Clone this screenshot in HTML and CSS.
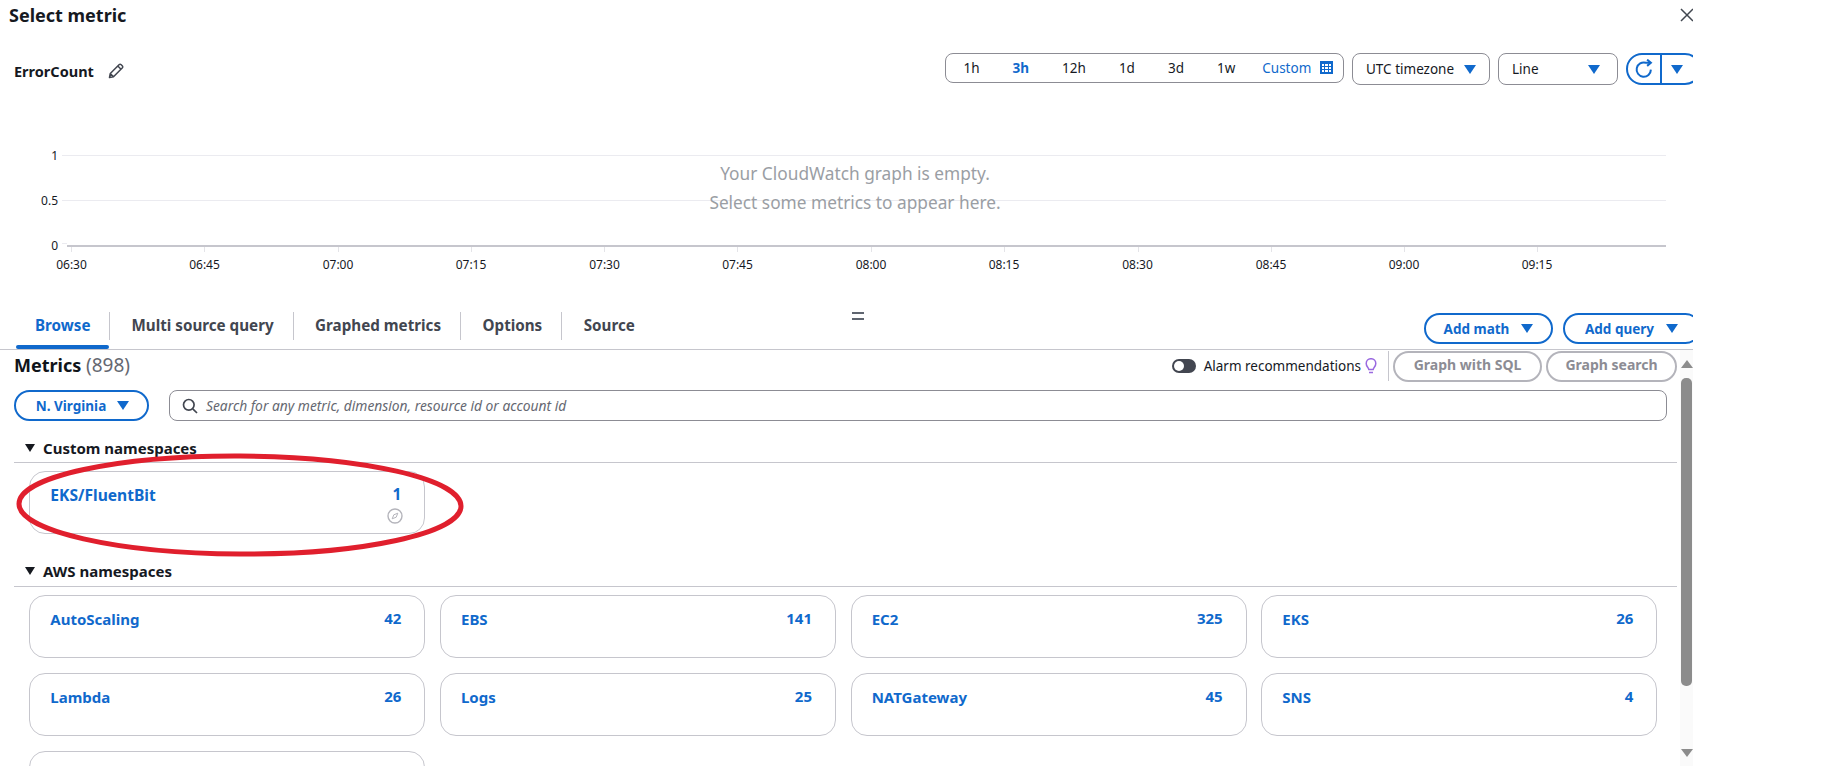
FILE: index.html
```html
<!DOCTYPE html>
<html lang="en">
<head>
<meta charset="utf-8">
<title>Select metric</title>
<link rel="stylesheet" href="styles.css">
</head>
<body>
<div class="dialog">
  <header class="dialog-head">
    <h1 class="dialog-title">Select metric</h1>
    <svg class="close-icon" viewBox="0 0 14 14"><path d="M1 1l12 12M13 1L1 13"/></svg>
  </header>

  <div class="toolbar">
    <div class="graph-name">
      <span>ErrorCount</span>
      <svg class="pencil" viewBox="0 0 16 16"><path d="M1.500 14.500l.8-4L11 1.800a1.600 1.600 0 0 1 2.200 0l1 1a1.600 1.600 0 0 1 0 2.200l-8.700 8.700zM2.300 10.500l3.200 3.200M9.800 3l3.200 3.200"/></svg>
    </div>
    <div class="controls">
      <div class="range">
        <span class="range-item">1h</span>
        <span class="range-item is-active">3h</span>
        <span class="range-item">12h</span>
        <span class="range-item">1d</span>
        <span class="range-item">3d</span>
        <span class="range-item">1w</span>
        <span class="range-custom">Custom</span>
        <svg class="calendar" viewBox="0 0 13 13"><rect width="13" height="13" fill="#1069cc"/><path d="M2 3h9v8H2z" fill="#fff"/><path d="M4.500 3v8M8.500 3v8M2 5.500h9M2 8.500h9" stroke="#1069cc" stroke-width="1"/></svg>
      </div>
      <div class="select select-utc">UTC timezone<i class="caret"></i></div>
      <div class="select select-line">Line<i class="caret"></i></div>
      <div class="refresh">
        <span class="refresh-main"><svg class="refresh-icon" viewBox="0 0 16 16"><path d="M13.500 8.500A5.700 5.700 0 1 1 9.500 3H13"/><path d="M10.500 .5L13.500 3l-3 2.500"/></svg></span>
        <span class="refresh-caret"><i class="caret"></i></span>
      </div>
    </div>
  </div>

  <svg class="chart" width="1693" height="140" viewBox="0 0 1693 140">
    <g class="grid"><path d="M62 15.500H1666M62 60.500H1666M62 103.500H67"/></g>
    <path class="axis" d="M67 106H1666"/>
    <path class="ticks" d="M71.500 107v5M204.500 107v5M338.500 107v5M471.500 107v5M604.500 107v5M737.500 107v5M871.500 107v5M1004.500 107v5M1138.500 107v5M1271.500 107v5M1404.500 107v5M1537.500 107v5"/>
    <g class="y-labels">
      <text x="58" y="20">1</text>
      <text x="58" y="65">0.5</text>
      <text x="58" y="110">0</text>
    </g>
    <g class="x-labels">
      <text x="71.500" y="129">06:30</text>
      <text x="204.500" y="129">06:45</text>
      <text x="338" y="129">07:00</text>
      <text x="471" y="129">07:15</text>
      <text x="604.500" y="129">07:30</text>
      <text x="737.500" y="129">07:45</text>
      <text x="871" y="129">08:00</text>
      <text x="1004" y="129">08:15</text>
      <text x="1137.500" y="129">08:30</text>
      <text x="1271" y="129">08:45</text>
      <text x="1404" y="129">09:00</text>
      <text x="1537" y="129">09:15</text>
    </g>
    <g class="empty-text">
      <text x="855" y="40">Your CloudWatch graph is empty.</text>
      <text x="855" y="69">Select some metrics to appear here.</text>
    </g>
  </svg>

  <div class="tabs-row">
    <nav class="tabs">
      <span class="tab is-active">Browse</span>
      <span class="tab">Multi source query</span>
      <span class="tab">Graphed metrics</span>
      <span class="tab">Options</span>
      <span class="tab tab-last">Source</span>
    </nav>
    <i class="drag-handle"></i>
    <div class="tab-actions">
      <button class="pill pill-math">Add math<i class="caret"></i></button>
      <button class="pill pill-query">Add query<i class="caret"></i></button>
    </div>
  </div>

  <div class="browser">
    <main class="browser-main">
      <div class="metrics-head">
        <h2 class="metrics-title">Metrics <span class="metrics-count">(898)</span></h2>
        <div class="metrics-tools">
          <span class="toggle"></span>
          <span class="toggle-label">Alarm recommendations</span>
          <svg class="bulb" viewBox="0 0 12 16"><path d="M3.800 11.500C3.500 9.500 1.200 8.500 1.200 5.500a4.800 4.800 0 0 1 9.600 0c0 3-2.300 4-2.600 6zM4 14.500h4"/></svg>
          <span class="tools-divider"></span>
          <button class="ghost ghost-sql">Graph with SQL</button>
          <button class="ghost ghost-search">Graph search</button>
        </div>
      </div>

      <div class="filters">
        <button class="pill pill-region">N. Virginia<i class="caret"></i></button>
        <div class="search">
          <svg class="search-icon" viewBox="0 0 16 16"><circle cx="6.800" cy="6.800" r="5.300"/><path d="M10.800 10.800l4.200 4.200"/></svg>
          <span class="search-text">Search for any metric, dimension, resource id or account id</span>
        </div>
      </div>

      <h3 class="section-title section-custom"><i class="section-caret"></i>Custom namespaces</h3>
      <div class="cards">
        <div class="card card-custom">
          <span class="card-name">EKS/FluentBit</span>
          <span class="card-side">
            <span class="card-count">1</span>
            <svg class="compass" viewBox="0 0 16 16"><circle cx="8" cy="8" r="7"/><path class="needle" d="M10.800 5.200L9.200 9.200 5.200 10.800 6.800 6.800z"/></svg>
          </span>
        </div>
      </div>

      <h3 class="section-title section-aws"><i class="section-caret"></i>AWS namespaces</h3>
      <div class="cards">
        <div class="card"><span class="card-name">AutoScaling</span><span class="card-count">42</span></div>
        <div class="card"><span class="card-name">EBS</span><span class="card-count">141</span></div>
        <div class="card"><span class="card-name">EC2</span><span class="card-count">325</span></div>
        <div class="card"><span class="card-name">EKS</span><span class="card-count">26</span></div>
        <div class="card"><span class="card-name">Lambda</span><span class="card-count">26</span></div>
        <div class="card"><span class="card-name">Logs</span><span class="card-count">25</span></div>
        <div class="card"><span class="card-name">NATGateway</span><span class="card-count">45</span></div>
        <div class="card"><span class="card-name">SNS</span><span class="card-count">4</span></div>
        <div class="card"></div>
      </div>
    </main>
    <div class="scrollbar">
      <i class="scroll-up"></i>
      <i class="scroll-thumb"></i>
      <i class="scroll-down"></i>
    </div>
  </div>
</div>

<svg class="annotation" width="480" height="120" viewBox="0 0 480 120">
  <ellipse cx="240" cy="57" rx="221" ry="49" transform="rotate(0.3 240 57)"/>
</svg>
</body>
</html>
```

FILE: styles.css
```css
* { box-sizing: border-box; }
html, body { margin: 0; height: 766px; overflow: hidden; background: #fff; }
body { position: relative; font-family: "Noto Sans", "Open Sans", sans-serif; color: #16191f; font-size: 14px; }
button { font-family: inherit; background: #fff; padding: 0; }
i { display: block; }

.dialog { width: 1693px; height: 766px; overflow: hidden; }

.dialog-head { height: 30px; padding: 0 0 0 9px; display: flex; align-items: center; justify-content: space-between; }
.dialog-title { margin: 0; font-size: 18px; font-weight: 700; line-height: 30px; color: #16191f; }
.close-icon { width: 14px; height: 14px; fill: none; stroke: #414750; stroke-width: 1.500; margin-right: -1px; }

.toolbar { margin-top: 23px; height: 32px; display: flex; justify-content: space-between; align-items: center; }
.graph-name { display: flex; align-items: center; padding-left: 14px; font-size: 14.500px; font-weight: 700; margin-top: 3px; }
.pencil { width: 16px; height: 16px; margin-left: 14px; fill: none; stroke: #424650; stroke-width: 1.500; stroke-linejoin: round; }

.controls { display: flex; align-items: flex-start; height: 32px; }
.range { width: 399px; height: 30px; border: 1px solid #8c8c94; border-radius: 8px; display: flex; align-items: center; padding: 0 0 1px 1px; }
.range-item { padding: 0 16.500px; line-height: 20px; font-size: 13.500px; color: #16191f; flex: none; }
.range-item.is-active { color: #1069cc; font-weight: 700; }
.range-custom { margin-left: 10.500px; color: #1069cc; font-size: 13.500px; flex: none; }
.calendar { width: 13px; height: 13px; margin-left: 9px; flex: none; }
.select { height: 32px; border: 1px solid #8c8c94; border-radius: 8px; display: flex; align-items: center; justify-content: space-between; padding: 0 13px; font-size: 13.500px; }
.select-utc { width: 138px; margin-left: 8px; }
.select-line { width: 120px; margin-left: 8px; padding-right: 17px; }
.caret { width: 0; height: 0; border-left: 6.500px solid transparent; border-right: 6.500px solid transparent; border-top: 9px solid #1069cc; }
.refresh { width: 75px; height: 32px; margin-left: 8px; border: 2px solid #1069cc; border-radius: 16px; display: flex; align-items: center; flex: none; margin-right: -8px; }
.refresh-main { width: 34px; height: 28px; border-right: 2px solid #1069cc; display: flex; align-items: center; justify-content: center; }
.refresh-icon { width: 20px; height: 20px; fill: none; stroke: #1069cc; stroke-width: 1.600; }
.refresh-caret { padding-left: 9px; }

.chart { display: block; margin-top: 55px; }
.grid { stroke: #ebebf0; stroke-width: 1; fill: none; }
.axis { stroke: #c6c6cd; stroke-width: 2; fill: none; }
.ticks { stroke: #e4e4e8; stroke-width: 1; fill: none; }
.y-labels text { font-size: 12px; text-anchor: end; fill: #16191f; }
.x-labels text { font-size: 12px; text-anchor: middle; fill: #16191f; }
.empty-text text { font-size: 17.300px; text-anchor: middle; fill: #9a9ea4; }

.tabs-row { position: relative; margin-top: 32px; height: 38px; border-bottom: 1px solid #c6c6cd; display: flex; justify-content: space-between; align-items: flex-start; }
.tabs { display: flex; height: 37px; margin-left: 16px; }
.tab { height: 28px; padding: 0 19px 0 21.500px; border-right: 1px solid #c6c6cd; font-size: 15.200px; font-weight: 700; line-height: 27px; color: #424650; position: relative; }
.tab-last { border-right: 0; }
.tab.is-active { color: #1069cc; padding: 0 18.500px 0 19px; }
.tab.is-active::after { content: ""; position: absolute; left: 0; right: 0; top: 33px; height: 4px; background: #1069cc; border-radius: 2px; }
.drag-handle { position: absolute; left: 852px; top: 0; width: 12px; height: 8px; border-top: 2px solid #5f6570; border-bottom: 2px solid #5f6570; }
.tab-actions { display: flex; gap: 10px; margin-top: 1px; margin-right: -8px; }
.pill { height: 31px; border: 2px solid #1069cc; border-radius: 16px; color: #1069cc; font-size: 13.500px; font-weight: 700; display: flex; align-items: center; justify-content: center; gap: 12px; }
.pill-math { width: 129px; }
.pill-query { width: 138px; justify-content: flex-start; padding-left: 20px; }

.browser { display: flex; height: 416px; overflow: hidden; }
.browser-main { width: 1680px; flex: none; }
.metrics-head { height: 32px; display: flex; justify-content: space-between; padding-left: 14px; padding-right: 3px; }
.metrics-title { margin: 0; font-size: 18px; font-weight: 700; line-height: 31px; color: #0f141a; }
.metrics-count { font-weight: 400; font-size: 19px; color: #656871; }
.metrics-tools { display: flex; align-items: center; }
.toggle { width: 24px; height: 14px; background: #424650; border-radius: 7px; position: relative; margin-right: 8px; }
.toggle::before { content: ""; position: absolute; left: 2px; top: 2px; width: 10px; height: 10px; border-radius: 50%; background: #fff; }
.toggle-label { font-size: 13.500px; color: #16191f; }
.bulb { width: 12px; height: 16px; margin-left: 4px; fill: none; stroke: #9a6ae0; stroke-width: 1.500; }
.tools-divider { width: 1px; height: 30px; background: #c6c6cd; margin: 0 4px 0 11px; }
.ghost { height: 31px; border: 2px solid #b4b4bb; border-radius: 16px; color: #8c8c94; font-size: 14px; font-weight: 700; line-height: 24px; padding-bottom: 2px; }
.ghost-sql { width: 149px; }
.ghost-search { width: 131px; margin-left: 4px; }

.filters { display: flex; align-items: center; margin-top: 8px; padding-left: 14px; }
.pill-region { width: 135px; height: 31px; gap: 11px; padding-left: 2px; }
.search { width: 1497.500px; height: 31px; margin-left: 20px; border: 1px solid #8c8c94; border-radius: 8px; display: flex; align-items: center; padding-left: 12px; }
.search-icon { width: 16px; height: 16px; fill: none; stroke: #424650; stroke-width: 1.700; }
.search-text { margin-left: 8px; font-size: 13.800px; font-style: italic; color: #656871; }

.section-title { margin: 0 3px 0 14px; height: 28px; border-bottom: 1px solid #c6c6cd; display: flex; align-items: center; font-size: 15px; font-weight: 700; color: #16191f; padding-left: 11px; padding-bottom: 3px; }
.section-custom { margin-top: 15px; height: 27px; }
.section-aws { margin-top: 25px; }
.section-caret { width: 0; height: 0; border-left: 5px solid transparent; border-right: 5px solid transparent; border-top: 8px solid #16191f; margin-right: 8px; }

.cards { display: grid; grid-template-columns: repeat(4, 396px); gap: 15px 14.700px; padding: 8px 0 0 29.300px; }
.card { height: 63px; border: 1px solid #c6c6cd; border-radius: 16px; padding: 14px 23px 0 20px; display: flex; justify-content: space-between; align-items: flex-start; color: #1069cc; font-size: 15px; font-weight: 700; line-height: 19px; }
.card-custom { font-size: 15.600px; }
.card-count { margin-top: -1px; }
.card-side { display: flex; flex-direction: column; align-items: flex-end; }
.compass { width: 16px; height: 16px; margin: 4px -2px 0 0; fill: none; stroke: #b4b4bb; stroke-width: 1.400; }
.needle { stroke-width: 1; }

.scrollbar { width: 13px; height: 416px; background: #fafafa; position: relative; }
.scroll-up, .scroll-down { position: absolute; left: 1px; width: 0; height: 0; border-left: 6px solid transparent; border-right: 6px solid transparent; }
.scroll-up { top: 10px; border-bottom: 8px solid #8c8c8c; }
.scroll-down { top: 399px; border-top: 8px solid #8c8c8c; }
.scroll-thumb { position: absolute; left: 1px; top: 28px; width: 11px; height: 308px; background: #8c8c8c; border-radius: 5px; }

.annotation { position: absolute; left: 0; top: 448px; fill: none; stroke: #e01f2d; stroke-width: 5; }
```
